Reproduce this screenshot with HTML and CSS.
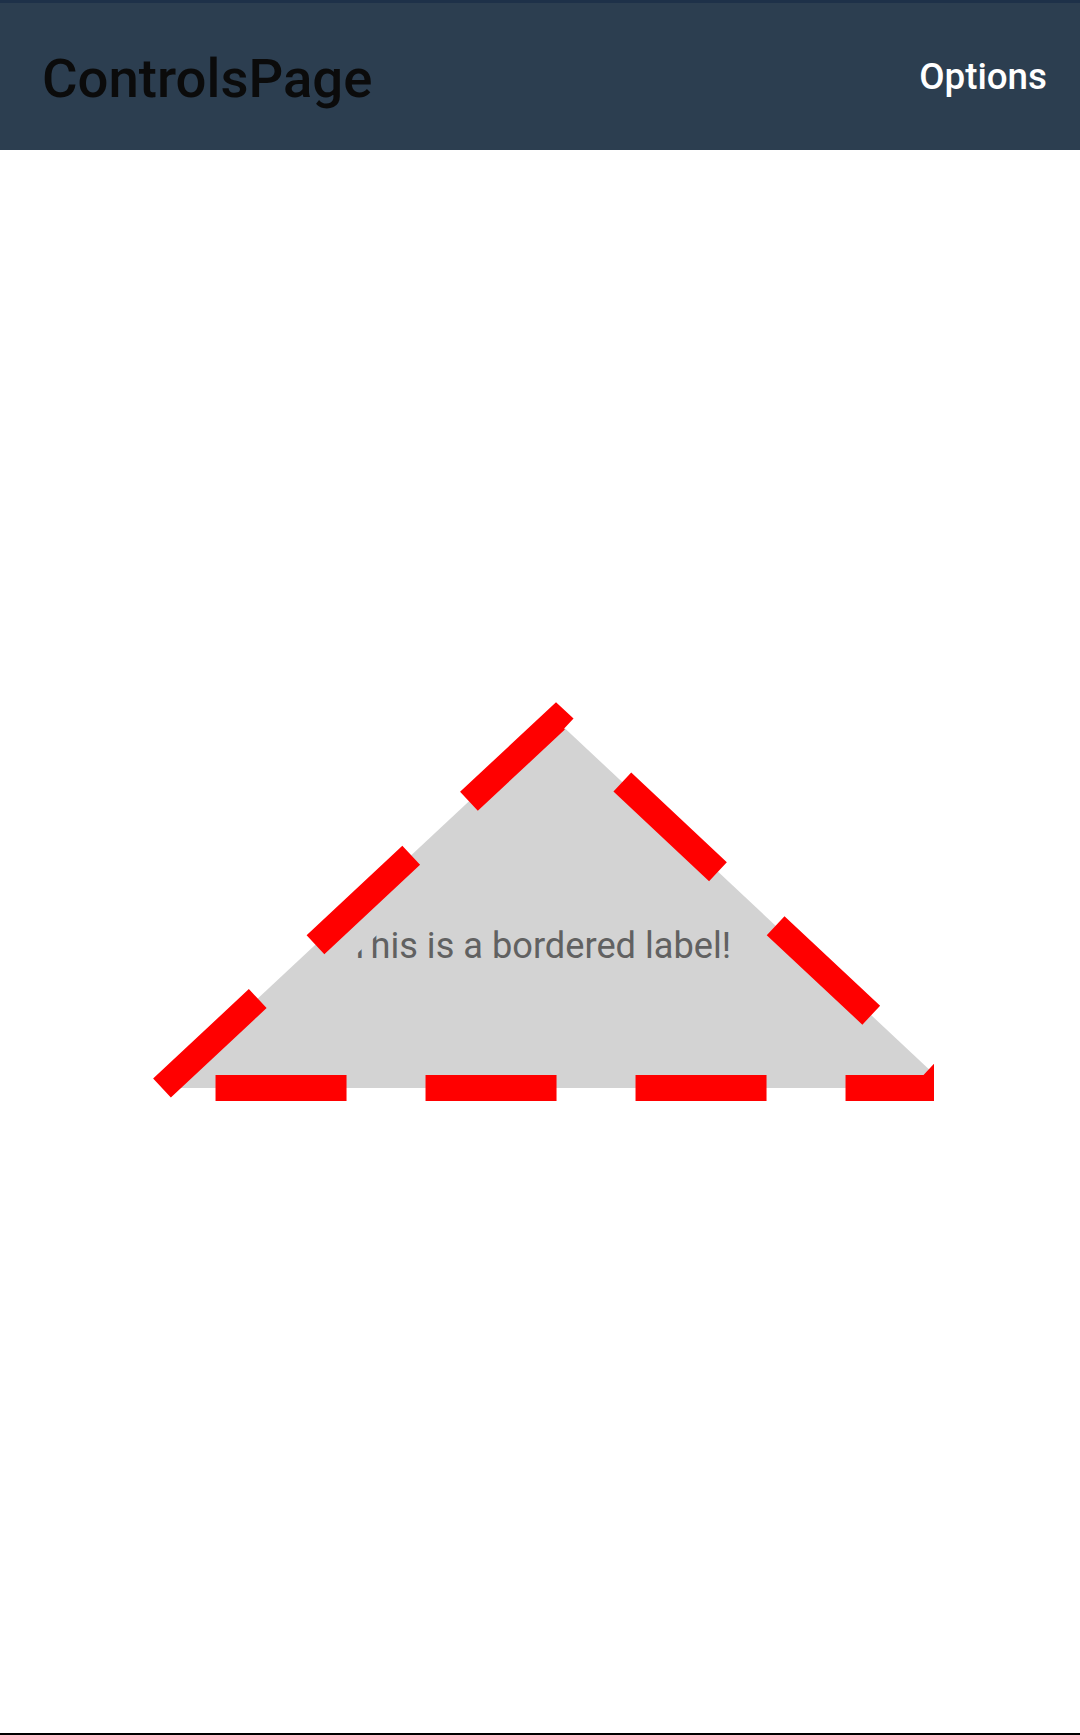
FILE: index.html
```html
<!DOCTYPE html>
<html>
<head>
  <title>ControlsPage</title>
  <link rel="stylesheet" href="styles.css">
</head>
<body>
  <div id="app">
    <header class="toolbar">
      <h1 class="toolbar-title">ControlsPage</h1>
      <span class="toolbar-action">Options</span>
    </header>
    <main class="content">
      <svg class="shape" viewBox="0 150 1080 1583" preserveAspectRatio="none">
        <defs>
          <clipPath id="bounds">
            <rect x="0" y="150" width="934" height="1583"></rect>
          </clipPath>
        </defs>
        <polygon class="triangle" clip-path="url(#bounds)" points="162,1088 556,720 949,1088"></polygon>
      </svg>
      <div class="label">This is a bordered label!</div>
    </main>
    <div class="navbar-edge"></div>
  </div>
</body>
</html>
```

FILE: styles.css
```css
body {
  margin: 0;
  font-family: Roboto, "Noto Sans", sans-serif;
  background-color: #ffffff;
}
#app {
  width: 1080px;
  height: 1735px;
  display: flex;
  flex-direction: column;
}
.toolbar {
  height: 147px;
  border-top: 3px solid #1e3149;
  background-color: #2c3e50;
  display: flex;
  align-items: center;
  justify-content: space-between;
  padding: 0 33px 0 42px;
}
.toolbar-title {
  margin: 0;
  padding-top: 3px;
  font-size: 54.5px;
  font-weight: 500;
  color: #0b0b0b;
}
.toolbar-action {
  font-size: 36.75px;
  font-weight: 500;
  color: #ffffff;
}
.content {
  height: 1583px;
  display: grid;
}
.shape, .label {
  grid-area: 1 / 1;
}
.shape {
  width: 1080px;
  height: 1583px;
}
.triangle {
  fill: #d3d3d3;
  stroke: #ff0000;
  stroke-width: 26;
  stroke-dasharray: 131 79;
  stroke-linejoin: miter;
}
.label {
  display: flex;
  align-items: center;
  justify-content: center;
  padding-top: 8px;
  font-size: 36.2px;
  color: #616161;
  clip-path: polygon(556px 618px, 871px 912px, 241px 912px);
}
.navbar-edge {
  height: 2px;
  background-color: #000000;
}
```
